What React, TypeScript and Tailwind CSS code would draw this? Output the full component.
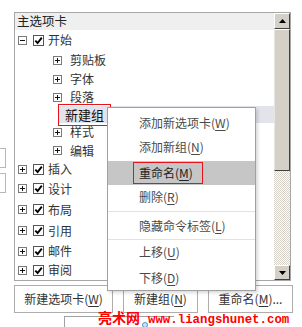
const rows = [
  { label: '开始', level: 0, open: true, h: 20 },
  { label: '剪贴板', level: 1, h: 20 },
  { label: '字体', level: 1, h: 18 },
  { label: '段落', level: 1, h: 18 },
  { label: '新建组', level: 2, h: 17 },
  { label: '样式', level: 1, h: 18 },
  { label: '编辑', level: 1, h: 19 },
  { label: '插入', level: 0, h: 18 },
  { label: '设计', level: 0, h: 21 },
  { label: '布局', level: 0, h: 21 },
  { label: '引用', level: 0, h: 21 },
  { label: '邮件', level: 0, h: 20 },
  { label: '审阅', level: 0, h: 18 },
]

function Expander({ open }: { open?: boolean }) {
  return (
    <span className="flex h-[9px] w-[9px] shrink-0 items-center justify-center border border-[#7a7a7a] bg-white">
      <svg width="7" height="7" viewBox="0 0 7 7">
        <path d="M1 3.5H6" stroke="#111" strokeWidth="1" />
        {!open && <path d="M3.5 1V6" stroke="#111" strokeWidth="1" />}
      </svg>
    </span>
  )
}

function Check() {
  return (
    <span className="flex h-[11px] w-[11px] shrink-0 items-center justify-center border border-[#555] bg-white">
      <svg width="9" height="9" viewBox="0 0 9 9">
        <path d="M1.3 4.6L3.6 7L7.8 1.6" fill="none" stroke="#000" strokeWidth="1.9" />
      </svg>
    </span>
  )
}

function Key({ k }: { k: string }) {
  return <>(<span className="underline underline-offset-2">{k}</span>)</>
}

function Scrollbar() {
  return (
    <div className="flex w-[16px] shrink-0 flex-col">
      <div className="flex h-[16px] items-center justify-center border-t border-l border-b border-r border-t-white border-l-white border-b-[#404040] border-r-[#404040] bg-[#d4d0c8]">
        <svg width="7" height="4" viewBox="0 0 7 4"><path d="M0 4L3.5 0L7 4Z" fill="#000" /></svg>
      </div>
      <div className="h-[142px] border-t border-l border-b border-r border-t-white border-l-[#e8e6e0] border-b-[#404040] border-r-[#404040] bg-[#d4d0c8]" />
      <div className="flex-1 bg-[repeating-conic-gradient(#d4d0c8_0%_25%,#ffffff_0%_50%)] bg-[length:2px_2px]" />
      <div className="flex h-[15px] items-center justify-center border-t border-l border-b border-r border-t-white border-l-white border-b-[#404040] border-r-[#404040] bg-[#d4d0c8]">
        <svg width="7" height="4" viewBox="0 0 7 4"><path d="M0 0L3.5 4L7 0Z" fill="#000" /></svg>
      </div>
    </div>
  )
}

function TreeRow({ r }: { r: (typeof rows)[number] }) {
  if (r.level === 0) {
    return (
      <div className="flex items-center pl-[3px]" style={{ height: r.h }}>
        <Expander open={r.open} />
        <span className="ml-[6px]"><Check /></span>
        <span className="ml-[4px]">{r.label}</span>
      </div>
    )
  }
  if (r.level === 1) {
    return (
      <div className="flex items-center pl-[38px]" style={{ height: r.h }}>
        <Expander />
        <span className="ml-[8px]">{r.label}</span>
      </div>
    )
  }
  return (
    <div className="flex items-center pl-[43px]" style={{ height: r.h }}>
      <div className="relative flex h-full flex-1 items-center bg-[#e3e3eb] pl-[7px]">
        <span className="text-[13px] text-[#111]">{r.label}</span>
        <div className="absolute -top-[2px] -bottom-[3px] left-0 w-[53px] border-[1.5px] border-[#e8121b]" />
      </div>
    </div>
  )
}

const menu = [
  { t: '添加新选项卡', k: 'W', h: 24 },
  { t: '添加新组', k: 'N', h: 24 },
  { gap: 2 },
  { t: '重命名', k: 'M', h: 24, active: true },
  { t: '删除', k: 'R', h: 24 },
  { sep: 4 },
  { t: '隐藏命令标签', k: 'L', h: 26 },
  { sep: 1 },
  { t: '上移', k: 'U', h: 24 },
  { gap: 2 },
  { t: '下移', k: 'D', h: 24 },
]

export default function App() {
  return (
    <div className="relative h-[327px] w-[302px] overflow-hidden bg-white font-['Noto_Sans_CJK_SC','Microsoft_YaHei',sans-serif] text-[12px] text-[#333]">
      <div className="flex pt-[12px]">
        {/* buttons of the left list, cut off by the window edge */}
        <div className="flex w-[14px] shrink-0 flex-col gap-[5px] pt-[136px]">
          <div className="h-[20px] w-[6px] border border-l-0 border-[#b8b8b8]" />
          <div className="h-[20px] w-[6px] border border-l-0 border-[#b8b8b8]" />
        </div>

        {/* 主选项卡 tree */}
        <div className="flex h-[269px] w-[277px] border border-[#a6a6a6]">
          <div className="flex flex-1 flex-col">
            <div className="flex h-[17px] items-center bg-[#efefef] pl-[2px] text-[12.5px] text-[#222]">主选项卡</div>
            {rows.map(r => <TreeRow key={r.label} r={r} />)}
          </div>
          <Scrollbar />
        </div>
      </div>

      <div className="ml-[14px] mt-[4px] flex gap-[10px]">
        <div className="flex h-[28px] w-[99px] items-center justify-center border border-[#adadad] bg-white">新建选项卡<Key k="W" /></div>
        <div className="flex h-[28px] w-[75px] items-center justify-center border border-[#adadad] bg-white">新建组<Key k="N" /></div>
        <div className="flex h-[28px] w-[85px] items-center justify-center border border-[#adadad] bg-white">重命名<Key k="M" />...</div>
      </div>

      <div className="ml-[64px] mt-[3px] flex h-[20px] w-[110px] border-t border-l border-[#a0a0a0] pt-[5px] pl-[77px]">
        <span className="h-[6px] w-[6px] rounded-full border border-[#5a8fd0] bg-[#cfe2f7]" />
      </div>

      {/* watermark */}
      <div className="absolute left-[98px] top-[310px] flex items-baseline text-[#ff0000]">
        <span className="text-[14px] font-bold leading-none">亮术网</span>
        <span className="ml-[8px] font-['Liberation_Mono',monospace] text-[12.4px] font-bold leading-none">www.liangshunet.com</span>
      </div>

      {/* context menu */}
      <div className="absolute left-[107px] top-[107px] flex w-[149px] flex-col border border-[#a0a0a0] bg-white pt-[3px] text-[12px] text-[#4a4a4a] shadow-[2px_2px_3px_rgba(0,0,0,0.15)]">
        {menu.map((m, i) => {
          if ('gap' in m) return <div key={i} style={{ height: m.gap }} />
          if ('sep' in m) return (
            <div key={i} className="flex items-center" style={{ height: m.sep }}>
              <div className="h-px w-full bg-[#e2e2e2]" />
            </div>
          )
          return (
            <div key={i} className={`relative flex items-center pl-[31px] ${m.active ? 'bg-[#c6c6c6] text-[#222]' : ''}`} style={{ height: m.h }}>
              {m.t}<Key k={m.k!} />
              {m.active && <div className="absolute top-[1px] bottom-[1px] left-[25px] w-[70px] border-[1.5px] border-[#e8121b]" />}
            </div>
          )
        })}
      </div>
    </div>
  )
}
